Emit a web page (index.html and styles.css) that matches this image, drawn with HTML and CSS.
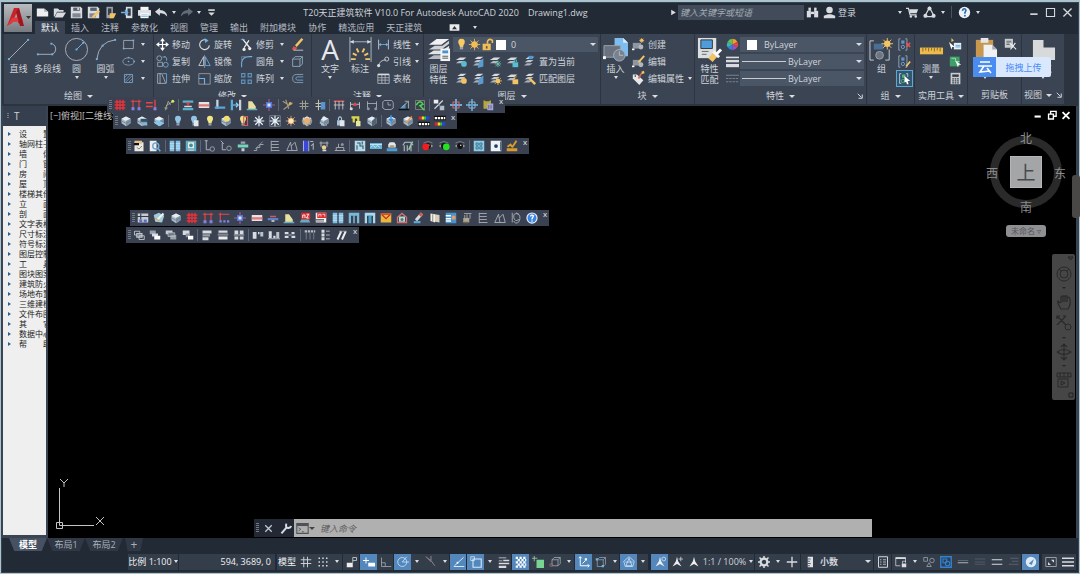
FILE: index.html
```html
<!DOCTYPE html>
<html lang="zh-CN">
<head>
<meta charset="utf-8">
<title>T20天正建筑软件 V10.0</title>
<link rel="stylesheet" href="styles.css">
</head>
<body>
<div class="app">
  <header class="head">
    <button class="logo" data-icon="logo" aria-label="应用程序菜单"></button>
    <div class="head-main">
      <div class="titlebar">
        <div class="qat">
          <button data-icon="new"></button><button data-icon="open"></button><button data-icon="save"></button><button data-icon="saveas"></button><button data-icon="mobopen"></button><button data-icon="mobsave"></button><button data-icon="print"></button><button data-icon="undo"></button><button class="drop" aria-label="放弃列表"></button><button data-icon="redo"></button><button class="drop" aria-label="重做列表"></button><button data-icon="more"></button>
        </div>
        <div class="title"><span>T20天正建筑软件 V10.0 For Autodesk AutoCAD 2020</span><span>Drawing1.dwg</span></div>
        <div class="search"><span data-icon="right"></span><input type="text" placeholder="键入关键字或短语" aria-label="搜索"></div>
        <div class="account">
          <button data-icon="binoc"></button><button class="login"><span data-icon="user"></span>登录</button>
          <button class="drop push" aria-label="登录菜单"></button><button data-icon="cart"></button><button data-icon="share"></button><button class="drop" aria-label="共享菜单"></button><i class="vbar"></i><button data-icon="help"></button><button class="drop" aria-label="帮助菜单"></button>
        </div>
        <div class="winctl"><button data-icon="min"></button><button data-icon="max"></button><button data-icon="close"></button></div>
      </div>
      <nav class="tabs">
        <button class="on">默认</button><button>插入</button><button>注释</button><button>参数化</button><button>视图</button><button>管理</button><button>输出</button><button>附加模块</button><button>协作</button><button>精选应用</button><button>天正建筑</button>
        <button class="tabmin" data-icon="tabmin"></button><button class="drop" aria-label="选项卡菜单"></button>
      </nav>
    </div>
  </header>

  <div class="ribbon">
    <section class="panel p-draw">
      <div class="body">
        <button class="big"><span data-icon="line"></span>直线</button>
        <button class="big"><span data-icon="pline"></span>多段线</button>
        <button class="big"><span data-icon="circle"></span>圆<i class="dn"></i></button>
        <button class="big"><span data-icon="arc"></span>圆弧<i class="dn"></i></button>
        <div class="col">
          <button class="sm"><span data-icon="rect"></span><i class="dn"></i></button>
          <button class="sm"><span data-icon="ellipse"></span><i class="dn"></i></button>
          <button class="sm"><span data-icon="hatch"></span><i class="dn"></i></button>
        </div>
      </div>
      <h2>绘图<i class="dn"></i></h2>
    </section>
    <section class="panel p-modify">
      <div class="body wide">
        <div class="col">
          <button class="sm"><span data-icon="move"></span>移动</button>
          <button class="sm"><span data-icon="copy"></span>复制</button>
          <button class="sm"><span data-icon="stretch"></span>拉伸</button>
        </div>
        <div class="col">
          <button class="sm"><span data-icon="rotate"></span>旋转</button>
          <button class="sm"><span data-icon="mirror"></span>镜像</button>
          <button class="sm"><span data-icon="scale"></span>缩放</button>
        </div>
        <div class="col">
          <button class="sm"><span data-icon="trim"></span>修剪<i class="dn"></i></button>
          <button class="sm"><span data-icon="fillet"></span>圆角<i class="dn"></i></button>
          <button class="sm"><span data-icon="array"></span>阵列<i class="dn"></i></button>
        </div>
        <div class="col">
          <button class="sm" data-icon="erase"></button><button class="sm" data-icon="explode"></button><button class="sm" data-icon="offset"></button>
        </div>
      </div>
      <h2>修改<i class="dn"></i></h2>
    </section>
    <section class="panel p-annot">
      <div class="body">
        <button class="big"><span class="letter">A</span>文字<i class="dn"></i></button>
        <button class="big"><span data-icon="dim"></span>标注</button>
        <div class="col">
          <button class="sm"><span data-icon="linear"></span>线性<i class="dn"></i></button>
          <button class="sm"><span data-icon="leader"></span>引线<i class="dn"></i></button>
          <button class="sm"><span data-icon="table"></span>表格</button>
        </div>
      </div>
      <h2>注释<i class="dn"></i></h2>
    </section>
    <section class="panel p-layer">
      <div class="body">
        <button class="big"><span data-icon="layers"></span>图层<br>特性</button>
        <div class="col grow">
          <div class="field"><span data-icon="bulb"></span><span data-icon="sun"></span><span data-icon="unlock"></span><i class="swatch"></i><select aria-label="图层"><option>0</option></select></div>
          <div class="iconrow"><button data-icon="lyoff"></button><button data-icon="lyiso"></button><button data-icon="lyfrz"></button><button data-icon="lylock"></button><button class="sm"><span data-icon="lycur"></span>置为当前</button></div>
          <div class="iconrow"><button data-icon="lyon"></button><button data-icon="lyiso"></button><button data-icon="lythaw"></button><button data-icon="lyunlock"></button><button class="sm"><span data-icon="lymatch"></span>匹配图层</button></div>
        </div>
      </div>
      <h2>图层<i class="dn"></i></h2>
    </section>
    <section class="panel p-block">
      <div class="body">
        <button class="big"><span data-icon="insert"></span>插入<i class="dn"></i></button>
        <div class="col">
          <button class="sm"><span data-icon="bcreate"></span>创建</button>
          <button class="sm"><span data-icon="bedit"></span>编辑</button>
          <button class="sm"><span data-icon="battr"></span>编辑属性<i class="dn"></i></button>
        </div>
      </div>
      <h2>块<i class="dn"></i></h2>
    </section>
    <section class="panel p-props">
      <div class="body">
        <button class="big"><span data-icon="match"></span>特性<br>匹配</button>
        <div class="col grow">
          <div class="proprow"><button data-icon="wheel"></button><div class="field"><i class="swatch in"></i><select aria-label="对象颜色"><option>ByLayer</option></select></div></div>
          <div class="proprow"><button data-icon="lweight"></button><div class="field"><i class="rule"></i><select aria-label="线宽"><option>ByLayer</option></select></div></div>
          <div class="proprow"><button data-icon="ltype"></button><div class="field"><i class="rule"></i><select aria-label="线型"><option>ByLayer</option></select></div></div>
        </div>
      </div>
      <h2>特性<i class="dn"></i><span class="launch" data-icon="launch"></span></h2>
    </section>
    <section class="panel p-group">
      <div class="body">
        <button class="big"><span data-icon="group"></span>组</button>
        <div class="col"><button class="sm" data-icon="ungroup"></button><button class="sm" data-icon="gedit"></button><button class="sm sel" data-icon="gsel"></button></div>
      </div>
      <h2>组<i class="dn"></i></h2>
    </section>
    <section class="panel p-util">
      <div class="body">
        <button class="big"><span data-icon="measure"></span>测量<i class="dn"></i></button>
        <div class="col"><button class="sm" data-icon="qsel"></button><button class="sm" data-icon="selall"></button><button class="sm" data-icon="calc"></button></div>
      </div>
      <h2>实用工具<i class="dn"></i></h2>
    </section>
    <section class="panel p-clip">
      <div class="body">
        <button class="big"><span data-icon="paste"></span>粘贴<i class="dn"></i></button>
        <div class="col"><button class="sm" data-icon="cut"></button></div>
      </div>
      <h2>剪贴板</h2>
    </section>
    <section class="panel p-view">
      <div class="body center"><button class="big"><span data-icon="base"></span>基点<i class="dn"></i></button></div>
      <h2>视图<i class="dn"></i><span data-icon="launch"></span></h2>
    </section>
    <button class="upload"><span data-icon="cloud"></span><b>拖拽上传</b></button>
  </div>

  <main class="work">
    <aside class="palette">
      <div class="pal-head"><i class="grip"></i>T</div>
      <ul>
        <li>设　　置</li><li>轴网柱子</li><li>墙　　体</li><li>门　　窗</li><li>房　　间</li><li>屋　　顶</li><li>楼梯其他</li><li>立　　面</li><li>剖　　面</li><li>文字表格</li><li>尺寸标注</li><li>符号标注</li><li>图层控制</li><li>工　　具</li><li>图块图案</li><li>建筑防火</li><li>场地布置</li><li>三维建模</li><li>文件布图</li><li>其　　它</li><li>数据中心</li><li>帮　　助</li>
      </ul>
    </aside>
    <div class="canvas">
      <div class="viewlabel">[−]俯视][二维线框]</div>
      <div class="docctl"><button data-icon="dmin"></button><button data-icon="drest"></button><button data-icon="dclose"></button></div>

      <div class="toolbar tb1" data-tools="axisgrid axiscol axisdim axiswand | wallred wallpink corner doorin slab column | penpair hash hashblue | dimtab dimred dimgray clock angle check | nodes planred planblue bag"></div>
      <div class="toolbar tb2" data-tools="cube cubehalf cubeopen | bulbblue bulbdoc bulbyel bulbcube bulbred snow snowbox sunny suncube lockcube lockdoc keyyel cubeedge | cubedown cubepen rainbow rainlow"></div>
      <div class="toolbar tb3" data-tools="folder mag | panes paneside | leg leg2 greenbar steps ladder slope doorblue doorlamp bench | window wave awning house | eyered eyegreen eye | fourpane dotbox crane"></div>
      <div class="toolbar tb4" data-tools="settings edit3d cube axisgrid axiscol axisdots column wallpink walllow slab areared tablered panes portal gate mail stamp pencil book tablist handpen ladder slope spiral info"></div>
      <div class="toolbar tb5" data-tools="copy1 copy2 copy3 copy4 | alignl alignc alignd | tiles1 tiles2 tiles3 | pins pinlist slashes"></div>

      <div class="cube">
        <div class="ring"></div><button class="top">上</button>
        <span class="n">北</span><span class="s">南</span><span class="w">西</span><span class="e">东</span>
        <button class="wcs">未命名 ▿</button>
      </div>
      <div class="navbar"><span data-icon="navtop"></span><button data-icon="wheelnav"></button><i class="dn"></i><button data-icon="hand"></button><button data-icon="zoomx"></button><i class="dn"></i><button data-icon="orbit"></button><i class="dn"></i><button data-icon="motion"></button><span data-icon="navend"></span></div>
      <div class="edge"></div>
      <div class="ucs" data-icon="ucs"></div>
      <div class="cmd"><i class="grip"></i><button data-icon="x"></button><button data-icon="wrench"></button><div class="cmdbox"><span data-icon="prompt"></span><i class="dn"></i><input type="text" placeholder="键入命令" aria-label="命令行"></div></div>
    </div>
  </main>

  <nav class="layouts"><button class="on">模型</button><button>布局1</button><button>布局2</button><button class="add">+</button></nav>

  <footer class="status">
    <button class="scale">比例 1:100<i class="dn"></i></button>
    <div class="coords">594, 3689, 0</div>
    <button class="model">模型</button>
    <button data-icon="sgrid"></button><button data-icon="sdots"></button><button class="drop" aria-label="捕捉菜单"></button><i class="sep"></i>
    <button data-icon="infer"></button><button class="act" data-icon="dyn"></button><button data-icon="ortho"></button><button class="act" data-icon="polar"></button><button class="drop" aria-label="极轴菜单"></button>
    <button data-icon="iso"></button><button class="drop" aria-label="等轴测菜单"></button><button class="act" data-icon="otrack"></button><button class="act" data-icon="osnap"></button><button class="drop" aria-label="对象捕捉菜单"></button>
    <button data-icon="slw"></button><button class="act" data-icon="transp"></button><button data-icon="cycle"></button><button data-icon="snap3d"></button><button class="drop" aria-label="三维捕捉菜单"></button><i class="sep"></i>
    <button class="act" data-icon="ducs"></button><button data-icon="filter"></button><button class="drop" aria-label="过滤菜单"></button><button class="act" data-icon="gizmo"></button><button class="drop" aria-label="小控件菜单"></button><i class="sep wide-sep"></i>
    <button class="act" data-icon="annvis"></button><button data-icon="annauto"></button><button data-icon="ann"></button><button class="ratio">1:1 / 100%<i class="dn"></i></button><i class="sep"></i>
    <button data-icon="gear"></button><button class="drop" aria-label="工作空间菜单"></button><button data-icon="plus"></button><i class="sep"></i>
    <div class="units"><span data-icon="ruler"></span><div class="field"><select aria-label="单位"><option>小数</option></select></div></div><i class="sep"></i>
    <button data-icon="qprop"></button><i class="sep"></i><button data-icon="lockui"></button><button class="drop" aria-label="锁定菜单"></button>
    <button data-icon="isolate"></button><button data-icon="hwacc"></button><button data-icon="dash1"></button><button data-icon="dash2"></button><button data-icon="dash3"></button><button data-icon="dash4"></button><button class="act" data-icon="perf"></button><i class="sep wide-sep"></i><button data-icon="full"></button><button data-icon="menu"></button>
  </footer>
</div>
<script src="icons.js"></script>
</body>
</html>
```

FILE: styles.css
```css
* { box-sizing: border-box; }
html, body { height: 100%; margin: 0; }
body {
  background: #a9c3cf;
  padding: 2px 1px 1px 1px;
  overflow: hidden;
  font: 9px/11px "Open Sans", "Noto Sans CJK SC", sans-serif;
  color: #cfd4da;
}
button, input, select {
  font: inherit; color: inherit; background: none; border: 0; padding: 0; margin: 0;
}
button { display: flex; align-items: center; justify-content: center; white-space: nowrap; }
[data-icon] { display: inline-flex; align-items: center; justify-content: center; flex: none; }
svg { display: block; width: 13px; height: 13px; overflow: visible; }
.dn, .drop::before, .field::after {
  content: ""; display: block; width: 0; height: 0; flex: none;
  border: 3px solid transparent; border-top-color: #d9dde2; border-bottom: 0;
}
.big .dn, .sm .dn, .drop::before { border-width: 2px; border-top-width: 3px; border-bottom: 0; }
.grip { width: 3px; height: 10px; background: repeating-linear-gradient(#707987 0 1px, transparent 1px 2px); flex: none; }

.app { height: 100%; display: flex; flex-direction: column; background: #222a35; border: 1px solid #39434f; }

/* header */
.head { display: flex; height: 31px; flex: none; }
.logo { width: 28px; height: 28px; margin: 1px 0 0 2px; background: linear-gradient(#b9bcbf, #777b80); }
.logo svg { width: 28px; height: 28px; }
.head-main { flex: 1; display: flex; flex-direction: column; min-width: 0; }
.titlebar { display: flex; align-items: center; height: 19px; }
.qat { display: flex; padding-left: 2px; }
.qat [data-icon] { width: 17px; }
.qat .drop { width: 8px; }
.title { flex: 1; display: flex; justify-content: center; gap: 9px; white-space: nowrap; }
.search { display: flex; align-items: center; gap: 2px; }
.search span, .search svg { width: 5px; }
.search input { width: 126px; height: 15px; background: #414b5a; font-style: italic; padding: 0 2px; outline: 0; }
.search input::placeholder { color: #a4abb5; }
.account { display: flex; width: 178px; align-items: center; }
.account [data-icon] { width: 17px; }
.account .drop { width: 9px; }
.account .push { margin-left: auto; }
.vbar { width: 1px; height: 12px; margin: 0 4px; background: #4b535f; }
.winctl { display: flex; padding: 0 2px 0 43px; }
.winctl button { width: 17px; }
.tabs { display: flex; flex: 1; align-items: stretch; padding-left: 3px; }
.tabs button { padding: 0 6px; color: #b4bac3; }
.tabs .on { background: #3b4453; color: #f0f2f4; }
.tabs .tabmin { margin-left: 14px; }

/* ribbon */
.ribbon { position: relative; display: flex; height: 72px; flex: none; background: #2c3440; padding: 0 14px 2px 2px; gap: 1px; }
.panel { background: #3b4453; display: flex; flex-direction: column; padding-top: 2px; min-width: 0; }
.p-draw { flex: 149 1 0; }
.p-modify { flex: 157 1 0; }
.p-annot { flex: 111 1 0; }
.p-layer { flex: 176 1 0; }
.p-block { flex: 93 1 0; }
.p-props { flex: 171 1 0; }
.p-group { flex: 47 1 0; }
.p-util { flex: 52 1 0; }
.p-clip { flex: 53 1 0; }
.p-view { flex: 42 1 0; }
.body { display: flex; height: 52px; }
.body.wide { gap: 6px; }
.body.center { justify-content: center; }
.panel h2 { position: relative; display: flex; align-items: center; justify-content: center; gap: 5px; margin: 0; font: inherit; line-height: 18px; white-space: nowrap; }
.panel h2 svg { width: 6px; height: 6px; }
.launch { position: absolute; right: 3px; }
.p-util h2, .p-view h2 { gap: 4px; }
.big { width: 29px; flex: none; flex-direction: column; justify-content: flex-start; line-height: 11px; }
.big span { height: 27px; }
.big svg { width: 25px; height: 25px; }
.big .dn { margin-top: 2px; }
.letter { font: 28px/27px "Open Sans", sans-serif; color: #e6e8eb; }
.p-annot .big { width: 30px; }
.p-annot .big:first-child { margin-left: 3px; }
.col { display: flex; flex-direction: column; }
.grow { flex: 1; min-width: 0; }
.sm { height: 17px; justify-content: flex-start; gap: 2px; }
.sm > span { width: 16px; }
.sm .dn { margin-left: 4px; }
.p-draw .sm .dn { margin-left: 3px; }
.p-annot .sm .dn, .p-block .sm .dn { margin-left: 2px; }
.wide .col:last-child { margin-left: 1px; }
.wide .col:last-child .sm { width: 16px; }
.field { flex: 1; display: flex; align-items: center; height: 15px; margin: 1px 2px 1px 0; background: #4a5566; padding-right: 2px; min-width: 0; }
.field select { flex: 1; min-width: 0; appearance: none; outline: 0; }
.field [data-icon] { width: 13px; }
.p-layer .field { padding-left: 2px; flex: none; }
.swatch { width: 10px; height: 10px; background: #fff; margin: 0 5px 0 2px; flex: none; }
.swatch.in { margin: 0 7px; }
.rule { width: 44px; height: 1px; background: #c8ccd2; margin: 0 2px; flex: none; }
.iconrow { display: flex; height: 17px; }
.iconrow > [data-icon] { width: 17px; }
.proprow { display: flex; height: 17px; }
.proprow > [data-icon] { width: 16px; }
.p-group .sm, .p-util .sm, .p-clip .sm { width: 17px; justify-content: center; }
.p-util .big { width: 32px; }
.p-clip .big { width: 34px; }
.sel { background: #31566f; outline: 1px solid #5ea7d8; outline-offset: -1px; }
.upload { position: absolute; right: 27px; top: 23px; width: 78px; height: 20px; background: #d9e8fd; border-radius: 2px; color: #4a8cf5; justify-content: flex-start; }
.upload [data-icon] { width: 23px; height: 20px; background: #4a8cf0; border-radius: 2px 0 0 2px; }
.upload svg { width: 16px; height: 16px; }
.upload b { flex: 1; font-weight: 400; text-align: center; }

/* work area */
.work { flex: 1; display: flex; min-height: 0; background: #3b4453; padding-right: 2px; }
.palette { width: 43px; margin: 0 2px 3px 1px; flex: none; display: flex; flex-direction: column; overflow: hidden; background: #efefef; color: #222; }
.pal-head { display: flex; align-items: center; gap: 5px; height: 20px; padding-left: 4px; background: #363f4d; color: #cfd4da; font-size: 10px; flex: none; }
.pal-head .grip { height: 6px; width: 2px; }
.palette ul { list-style: none; margin: 0; padding: 3px 0; font: 8px/10px "Noto Sans CJK SC", sans-serif; }
.palette li { display: flex; align-items: center; gap: 8px; padding-left: 5px; height: 10px; white-space: nowrap; }
.palette li::before { content: ""; border: 2px solid transparent; border-left: 3px solid #2a5f94; border-right: 0; }
.canvas { position: relative; flex: 1; background: #000; min-width: 0; }
.viewlabel { padding: 4px 2px; color: #c4c4c4; white-space: nowrap; }
.docctl { position: absolute; top: 4px; right: 3px; display: flex; }
.docctl svg { width: 14px; height: 11px; }

.toolbar { position: absolute; z-index: 2; display: flex; align-items: center; height: 16px; padding: 0 9px 0 2px; background: #3a4252; }
.toolbar button { flex: 1 1 0; min-width: 0; }
.toolbar svg { width: 12px; height: 12px; }
.toolbar .sep { width: 1px; height: 12px; margin: 0 1px; background: #5c6573; }
.toolbar .shut { position: absolute; right: 0; top: 0; font: 8px/8px "Open Sans", sans-serif; color: #e8e8e8; width: 6px; }
.tb1 { left: 59px; top: -9px; width: 398px; }
.tb2 { left: 65px; top: 7px; width: 344px; }
.tb3 { left: 78px; top: 32px; width: 403px; }
.tb4 { left: 82px; top: 104px; width: 419px; }
.tb5 { left: 78px; top: 121px; width: 233px; }

.cube { position: absolute; right: 8px; top: 24px; width: 84px; height: 110px; font: 12px/14px "Noto Sans CJK SC", sans-serif; color: #8c8c8c; }
.cube > * { position: absolute; }
.ring { left: 6px; top: 6px; width: 72px; height: 72px; border: 8px solid #2a2a2a; border-radius: 50%; }
.top { left: 26px; top: 26px; width: 32px; height: 32px; background: #a3a5a6; border: 1px solid #b4b6b7; color: #484b4e; font-size: 19px; }
.n { left: 36px; top: 1px; }
.s { left: 36px; top: 70px; }
.w { left: 2px; top: 36px; }
.e { right: 2px; top: 36px; }
.wcs { left: 22px; top: 95px; width: 40px; height: 12px; background: #8f9092; border-radius: 3px; color: #55575a; font-size: 8px; }
.navbar { position: absolute; right: 1px; top: 148px; width: 23px; height: 146px; padding: 2px 0; background: #464646; border-radius: 2px; display: flex; flex-direction: column; align-items: center; justify-content: space-between; }
.navbar .dn { border-width: 2px; border-top-color: #242424; border-bottom: 0; }
.navbar svg { width: 16px; height: 16px; }
.navbar > span { align-self: flex-end; }
.navbar > span svg { width: 8px; height: 5px; }
.edge { position: absolute; right: -4px; top: 69px; width: 8px; height: 43px; background: #4a4747; border-radius: 3px; }
.ucs { position: absolute; left: 6px; bottom: 5px; }
.ucs svg { width: 52px; height: 54px; }
.cmd { position: absolute; left: 206px; right: 204px; bottom: 1px; height: 18px; display: flex; align-items: center; background: #222934; padding-left: 2px; gap: 1px; }
.cmd > button { width: 16px; }
.cmdbox { flex: 1; display: flex; align-items: center; align-self: stretch; background: #b0b0b0; padding-left: 2px; color: #555; }
.cmdbox .dn { border-top-color: #444; margin-right: 5px; }
.cmdbox input { flex: 1; font-style: italic; outline: 0; }
.cmdbox input::placeholder { color: #5c5c5c; }

/* layout tabs and status bar */
.layouts { display: flex; height: 14px; flex: none; padding-left: 7px; }
.layouts button { width: 38px; height: 13px; background: #2f3844; color: #a9b0ba; clip-path: polygon(0 0, 100% 0, 86% 100%, 14% 100%); }
.layouts .on { background: #465162; color: #fff; font-weight: 700; }
.layouts .add { width: 18px; font-size: 12px; margin-left: 2px; }
.status { display: flex; align-items: center; height: 20px; flex: none; padding: 1px 2px 2px 126px; white-space: nowrap; }
.status > * { height: 16px; background: #343d4a; display: flex; align-items: center; flex: none; }
.status > [data-icon] { width: 17px; }
.status .drop { width: 11px; }
.status .sep { width: 1px; background: #222a35; }
.status .wide-sep { width: 3px; }
.status .act { background: #5488bd; outline: 1px solid #222a35; }
.scale { width: 50px; gap: 2px; color: #f0f2f4; }
.coords { width: 96px; justify-content: flex-end; padding-right: 4px; margin: 0 2px 0 1px; color: #f0f2f4; }
.model { width: 20px; color: #f0f2f4; }
.ratio { width: 52px; gap: 3px; }
.scale .dn, .ratio .dn { border-width: 2px; border-top-width: 3px; border-bottom: 0; }
.status .units { flex: 1; min-width: 0; }
.units .field { background: none; margin: 0; }
.units > [data-icon] { width: 17px; }
.units select { padding-left: 2px; font-weight: 700; }
.status svg { width: 12px; height: 12px; }
```

FILE: icons.js
```javascript
const L = '#d8dbdf', B = '#6fb2e6', Y = '#f2c464', G = '#8d949e';
const s = (d, c = L, w = 1) => `<path d="${d}" fill="none" stroke="${c}" stroke-width="${w}"/>`;
const f = (d, c = L) => `<path d="${d}" fill="${c}"/>`;
const r = (x, y, w, h, c = L) => `<rect x="${x}" y="${y}" width="${w}" height="${h}" fill="${c}"/>`;
const c = (x, y, q, col = L) => `<circle cx="${x}" cy="${y}" r="${q}" fill="${col}"/>`;
const o = (x, y, q, col = L, w = 1) => `<circle cx="${x}" cy="${y}" r="${q}" fill="none" stroke="${col}" stroke-width="${w}"/>`;

const cube = f('M2 5 8 2 14 5V11L8 15 2 11Z', '#a9bac8') + f('M2 5 8 2 14 5 8 8Z', '#e6edf2') + f('M8 8 14 5V11L8 15Z', '#7f93a5') + s('M2 8 8 11 14 8', '#6b7f90');
const bulb = k => f('M4 5A4 4 0 0 1 12 5C12 8 10 8 10 11H6C6 8 4 8 4 5Z', k) + r(6, 11, 4, 3, '#9aa3ad');
const snow = s('M8 1V15M1 8H15M3 3 13 13M13 3 3 13', '#e8f4fa', 1.6);
const sun = k => s('M8 1V15M1 8H15M3 3 13 13M13 3 3 13', k) + c(8, 8, 4, k);
const lock = f('M4 7H12V14H4Z', '#a9c4d6') + s('M6 7V4Q8 1 10 4V7', '#a9c4d6', 1.5);
const lay = f('M1 6 6 3H14L10 6Z') + f('M1 10 5 7.500H12L9 10Z', '#b4bac2');
const lay3 = f('M3 5 7 2H14L10 5Z') + f('M2 9 6 6H13L9 9Z', '#c3c8ce') + f('M1 13 5 10H12L8 13Z', '#a9b0b8');
const doc = r(8, 7, 6, 8, '#e5e8ea');
const eye = f('M1 8Q8 1 15 8 8 14 1 8Z', '#999') + c(8, 8, 4, '#111') + s('M2 4Q8 0 14 4', '#888') + c(9, 7, 1, '#eee');
const star = (x, y, q) => `<g transform="translate(${x} ${y})">` + s(`M0-${q}V${q}M-${q} 0H${q}M-${q * .7}-${q * .7} ${q * .7} ${q * .7}M${q * .7}-${q * .7}-${q * .7} ${q * .7}`, Y) + c(0, 0, q * .55, Y) + '</g>';
const ann = f('M8 1 9.500 7 14 14 8 10.500 2 14 6.500 7Z', '#eceef0');

const ICONS = {
  logo: ['0 0 28 28', f('M3 22 10 4H15L18 20 14 19 12.500 9 8 19Z', '#c8232b') + f('M3 22 8 14 17 13 19 17 9 18Z', '#e03a3e') + f('M15 4 20 22H16L12 8Z', '#a3151d') + f('M22 12H27L24.500 15Z', '#333')],
  new: f('M1 3H10L15 7V13H1Z', '#eceef0') + f('M10 3V7H15Z', '#aab0b8'),
  open: f('M1 3H6L8 5H13V7H5L2 13H1Z') + f('M5 8H16L12 14H2Z'),
  save: f('M1 1H13L15 3V15H1Z') + r(4, 2, 8, 4, '#59626f') + r(3, 9, 10, 5, '#808893') + r(9, 2, 2, 3),
  saveas: f('M1 1H13L15 3V15H1Z') + r(4, 2, 8, 4, '#59626f') + r(3, 9, 8, 5, '#808893') + s('M7 14 15 6', Y, 3),
  mobopen: r(3, 1, 8, 14, '#9aa1aa') + r(5, 3, 4, 8, '#333c48') + f('M7 9H15L12 15H7Z', Y),
  mobsave: r(6, 1, 8, 14) + r(8, 3, 4, 9, '#333c48') + s('M0 8H8M5 5 8 8 5 11', B, 2),
  print: r(3, 1, 10, 5, '#f4f5f6') + f('M0 5H16V12H0Z', '#dfe2e5') + r(3, 9, 10, 6, '#fff') + s('M4 11H12M4 13H12', B),
  undo: f('M0 7 6 2V5Q14 5 15 13 11 8 6 9V12Z'),
  redo: f('M16 7 10 2V5Q2 5 1 13 5 8 10 9V12Z', '#626b78'),
  more: r(4, 4, 8, 2) + f('M4 8H12L8 12Z'),
  right: ['0 0 5 14', f('M0 4 5 7 0 10Z')],
  binoc: r(1, 6, 5, 8) + r(10, 6, 5, 8) + r(3, 2, 3, 4) + r(10, 2, 3, 4) + r(6, 7, 4, 3),
  user: c(8, 5, 4) + f('M1 15V12L6 10H10L15 12V15Z'),
  cart: s('M0 3H3L5 11H13', L, 1.5) + f('M4 4H15L13 9H5Z') + c(6, 13, 1.5) + c(12, 13, 1.5),
  share: s('M8 2 14 13H2Z', L, 1.5) + c(8, 3, 2.5) + c(3, 12, 2.5) + c(13, 12, 2.5),
  help: c(8, 8, 7, '#eef1f4') + s('M5.500 6Q6 3 8.500 3.500 11 5 8.500 8V9.500', '#2e69ad', 2) + c(8.5, 12, 1.2, '#2e69ad'),
  min: r(4, 9, 9, 2), max: s('M3 3H13V13H3Z', L, 1.3), close: s('M3 3 13 13M13 3 3 13', L, 1.6),
  tabmin: r(2, 4, 12, 8, '#e8eaec') + f('M5 10 8 6 11 10Z', '#333'),
  line: ['0 0 26 26', s('M3 23 23 3', '#a9b0b9') + r(2, 22, 2, 2, B) + r(22, 2, 2, 2, B)],
  pline: ['0 0 26 26', s('M3 18H18A6 6 0 0 0 18 7', '#a9b0b9') + r(2, 17, 2, 2, B) + r(17, 17, 2, 2, B) + r(16, 6, 2, 2, B)],
  circle: ['0 0 26 26', o(13, 13, 11.5, '#a9b0b9') + s('M13 13 20 6', B) + r(12, 12, 2, 2, B) + r(19, 5, 2, 2, B)],
  arc: ['0 0 26 26', s('M4 23Q6 5 23 3', '#a9b0b9') + r(3, 22, 2, 2, B) + r(22, 2, 2, 2, B) + r(9, 8, 2, 2, B)],
  rect: s('M2 3H14V13H2Z', '#aab1ba') + r(1, 12, 2, 2, B) + r(13, 2, 2, 2, B),
  ellipse: '<ellipse cx="8" cy="8" rx="7" ry="4.500" fill="none" stroke="#8fa6bb"/>' + c(8, 8, 1, B) + c(8, 3, 1, B) + c(15, 8, 1, B),
  hatch: s('M3 3H13V13H3Z', B) + s('M3 7 7 3M3 11 11 3M4 13 13 4M8 13 13 8', '#8995a3'),
  move: s('M8 2V14M2 8H14', '#fff', 1.5) + f('M8 0 11 4H5ZM8 16 11 12H5ZM0 8 4 5V11ZM16 8 12 5V11Z', '#fff'),
  copy: o(4, 4, 3, '#9dadbc') + r(8, 2, 4, 1, B) + o(12, 12, 3, B) + s('M2 9H8V14H2ZM10 2Q14 2 13 7', '#9dadbc'),
  stretch: s('M2 2H7L12 14H2ZM5 2V14', '#aeb6bf') + s('M8 2H13V14', B),
  rotate: s('M11 3A6 6 0 1 0 14 9', L, 1.4) + f('M8 0 13 3 9 6Z', B),
  mirror: s('M7 2V13H1Z', L) + s('M9 2V13H15Z', B) + s('M8 0V16', '#8d949e'),
  scale: s('M1 2H15V15H1Z', '#9aa3ad') + s('M1 8H8V15', B, 1.4),
  trim: s('M3 1 12 12M11 3 5 12', '#eee', 1.6) + c(12, 13, 2, '#eee') + c(5, 14, 2, '#eee') + s('M1 2H6', B),
  fillet: s('M2 15V9Q3 2 12 2H15', B, 1.3) + s('M2 7V2H8', '#7a838f'),
  array: s('M2 2H6V6H2ZM10 2H14V6H10ZM2 10H6V14H2ZM10 10H14V14H10Z', '#5f92bd', 1.4),
  erase: s('M6 10 14 1', Y, 3) + f('M3 10 8 12 5 15 1 14Z', '#e0524a') + s('M3 15H15'),
  explode: s('M2 5H11V14H2ZM2 5 5 2H14L11 5M14 2V11L11 14', '#9ab4c8'),
  offset: s('M15 3H7A5 5 0 0 0 7 13H15', '#9aa6b2') + s('M15 6H8A2 2 0 0 0 8 10H15', B),
  dim: ['0 0 26 26', s('M2 0V26M24 0V26M2 5H24', '#a9b8c5') + f('M2 5 6 3V7ZM24 5 20 3V7Z') + s('M9 12 11 16M17 12 15 16M5 17 9 19M21 17 17 19M3 23H8M23 23H18', Y, 2)],
  linear: s('M2 2V14M14 2V14', L) + s('M3 8H13', B) + f('M2 8 5 6V10ZM14 8 11 6V10Z', B),
  leader: s('M2 14Q3 6 11 6', L) + o(12, 5, 2.5) + c(2, 13, 2),
  table: s('M1 3H15V14H1ZM1 7H15M1 10H15M6 3V14M10 3V14', '#b5bbc3') + r(1, 2, 14, 2),
  layers: ['0 0 26 26', f('M3 8 11 2H24L16 8Z', '#f0f1f2') + f('M3 13 9 9H17L24 4V7L16 13Z', '#cfd2d6') + f('M2 18 8 14H17L24 9V12L15 18Z', '#e3e5e7') + f('M2 23 8 19H16V23Z', '#b8bcc2') + r(15, 12, 10, 13, '#f2f4f5') + r(17, 14, 6, 3, '#4b93cf') + s('M17 20H23M17 22H23', '#555')],
  bulb: bulb('#f7cc63'), sun: sun('#f3bd55'),
  unlock: r(2, 7, 10, 8, '#f3bd55') + s('M8 7V4Q10 0 14 3V6', '#f3bd55', 2) + r(6, 10, 2, 3, '#555'),
  lyoff: lay + c(11, 11, 3.5, '#58bdd0'), lyiso: lay3 + f('M9 8 14 4V14L7 16Z', '#5b9bd0'),
  lyfrz: lay + s('M11 7V15M7 11H15M8 8 14 14M14 8 8 14', '#67c9b0'), lylock: lay + r(8, 9, 7, 6, '#55c0d4') + s('M10 9V6H13V9', '#55c0d4'),
  lycur: lay3 + f('M7 1H12V5H7Z', '#4a9ae0'), lyon: lay3 + c(11, 11, 3.5, Y), lythaw: lay3 + star(11, 11, 5),
  lyunlock: lay + r(8, 9, 7, 6, Y) + s('M10 9V6H13', Y), lymatch: lay3 + s('M8 8 15 15', Y, 3),
  insert: ['0 0 26 26', f('M12 1H21L26 6V20H12Z', '#7dbdf0') + f('M21 1V6H26Z', '#d6ebfb') + r(1, 9, 17, 12, '#69727e') + s('M1 9H18V21H1Z', '#9aa3ad') + c(17, 19, 6, '#78828e') + o(17, 19, 6, '#a9b1ba') + s('M17 15V19H21', '#b5bcc4') + r(0, 20, 3, 3, '#fff')],
  bcreate: r(1, 6, 10, 7, '#8f97a2') + c(11, 11, 3, '#b1b7bf') + star(12, 3, 3) + r(0, 13, 3, 2, '#fff'),
  bedit: r(1, 6, 10, 7, '#8f97a2') + c(11, 12, 3, '#b1b7bf') + s('M8 9 15 1', Y, 2.5) + r(0, 13, 3, 2, '#fff'),
  battr: f('M1 3H6L14 10 9 16 1 8Z', '#e6e8ea') + s('M8 8 12 1', '#d76a4c', 2) + s('M12 1 15 0', Y, 3) + c(4, 5, 1, '#333'),
  match: ['0 0 26 26', r(1, 1, 19, 21, '#dcdfe2') + r(4, 3, 12, 9, '#4e9cdb') + s('M4 3H16V12H4Z', '#333') + s('M5 15H12M5 18H10', '#666') + s('M14 24 19 18', Y, 6) + s('M17 15 23 21', '#f6f6f6', 3) + s('M20 18 25 13', '#fff', 3)],
  wheel: f('M8 8V1A7 7 0 0 1 14 4.500Z', '#f0a030') + f('M8 8 14 4.500A7 7 0 0 1 14 11.500Z', '#e04a3a') + f('M8 8 14 11.500A7 7 0 0 1 8 15Z', '#a44ac0') + f('M8 8V15A7 7 0 0 1 2 11.500Z', '#3c7be0') + f('M8 8 2 11.500A7 7 0 0 1 2 4.500Z', '#37b8b0') + f('M8 8 2 4.500A7 7 0 0 1 8 1Z', '#6cc04a'),
  lweight: r(0, 2, 16, 2) + r(0, 6, 16, 3) + r(0, 11, 16, 4),
  ltype: s('M0 4H16', '#888f99') + '<path d="M0 8H16M0 12H16" stroke="#888f99" stroke-dasharray="3 1"/>',
  launch: ['0 0 8 8', s('M1 1 6 6M7 2V7H2', L, 1.3)],
  group: ['0 0 26 26', s('M5 4H1V24H5M17 24H21V13', '#c8cdd3') + r(5, 7, 10, 6, '#4b6f94') + c(11, 19, 4, '#6c7581') + o(11, 19, 4, '#9ba3ad') + star(19, 7, 6)],
  ungroup: s('M3 1H1V15H3M9 15H11V1H9', '#9fb3c5') + r(4, 3, 4, 4, '#5e94c8') + o(6, 11, 2, B) + s('M10 6 15 11M15 6 10 11', '#e2564e', 1.8),
  gedit: s('M3 1H1V15H3M9 15H11V1H9', '#9fb3c5') + r(4, 3, 4, 4, '#5e94c8') + o(6, 11, 2, B) + s('M10 14 15 8', Y, 2),
  gsel: s('M4 2H2V14H4M10 2H12V6') + r(5, 3, 4, 4, '#50b878') + o(6, 11, 2, '#50b878') + f('M8 5 15 11H12L13 15 11 15 10 12 8 13Z', '#fff'),
  measure: ['0 0 26 26', r(1, 11, 24, 7, '#eebb4d') + s('M4 11V15M7 11V14M10 11V15M13 11V14M16 11V15M19 11V14M22 11V15', '#8d6a24')],
  qsel: r(6, 6, 9, 8, '#e7f0f7') + s('M8 9H14M8 11H14', '#4b93cf') + f('M0 5 7 11 4 11 3 14Z', '#fff') + f('M3 0 6 3 3 5Z', Y),
  selall: r(1, 2, 12, 12, '#3f9f67') + s('M3 4H8V8H13', '#a8e0bf') + f('M8 7 15 12 12 12 11 15Z', '#fff'),
  calc: r(2, 1, 12, 14, '#c9cdd2') + r(4, 3, 8, 3, '#333c48') + '<path d="M4 8.500H12M4 11H12M4 13.500H12" stroke="#333c48" stroke-width="1.500" stroke-dasharray="2 1"/>',
  paste: ['0 0 26 26', r(3, 3, 18, 22, '#c9984f') + r(8, 1, 8, 5, '#e4e6e8') + f('M11 8H20L25 13V26H11Z', '#eff1f2') + f('M20 8V13H25Z', '#a4aab2')],
  cut: r(1, 1, 10, 11, '#c9cdd2') + s('M3 4H9M3 6H9M3 8H7', '#555') + s('M7 6 15 14M14 6 8 14', '#eee', 1.3),
  base: ['0 0 26 26', f('M2 3H13V11H25V24H2Z', '#d7d9db')],
  cloud: s('M3 3H13M1 7H15', '#fff', 1.6) + s('M7 7 3 13 13 12M10 9 14 14', '#fff', 1.6),
  dmin: r(3, 8, 9, 3, '#fff'), drest: s('M6 5V2H14V9H11M3 6H10V13H3Z', '#fff', 2), dclose: s('M3 3 13 13M13 3 3 13', '#fff', 2.6),

  axisgrid: s('M4 1V15M8 1V15M12 1V15M1 4H15M1 8H15M1 12H15', '#e8323a', 1.8),
  axiscol: s('M1 3H15M4 1V12M12 1V12', '#e8454a', 1.5) + r(2, 11, 4, 4, '#7d83e8') + r(10, 11, 4, 4, '#7d83e8'),
  axisdim: s('M0 5H9M0 10H9M12 1V15', '#e8454a', 1.8) + r(10, 11, 4, 4, '#7d83e8'),
  axisdots: s('M1 3H15M3 1V12', '#e8454a', 1.5) + r(2, 11, 3, 3, '#7d83e8') + r(7, 11, 3, 3, '#7d83e8') + r(12, 11, 3, 3, '#7d83e8'),
  axiswand: s('M3 15 7 3 10 8M4 9 12 4', '#b9b49a') + c(4, 12, 2, '#8d9486') + c(13, 3, 2, '#dce85a'),
  wallred: r(1, 2, 14, 3, '#55b3c8') + r(1, 12, 14, 3, '#55b3c8') + f('M5 5H11L8 10Z', '#e8323a') + r(3, 9, 10, 2),
  wallpink: r(1, 4, 14, 8, '#e6e3e0') + r(1, 7, 14, 3, '#e0777c'),
  walllow: r(1, 8, 14, 3, '#5b80c8') + r(4, 5, 8, 2, '#d15a60') + r(6, 11, 4, 2),
  corner: r(3, 1, 3, 12, '#c7d6e2') + r(1, 10, 14, 3, '#5aa5d8'),
  doorin: r(1, 1, 3, 14, '#55aede') + r(12, 1, 3, 14, '#c5d0d8') + s('M4 8H11M8 5 11 8 8 11', '#8fd0ff', 1.5),
  slab: f('M3 14V3H8L13 10V14Z', '#e7e0a0') + r(1, 13, 14, 2, '#60b0c0'),
  column: s('M8 0V16M0 8H16', '#a65a8e', 1.5) + r(4, 4, 8, 8, '#5276d8') + r(6, 6, 4, 4, '#d8e2ff'),
  penpair: s('M1 3 9 8M2 14 14 5M5 1 9 13', '#a39a7e', 1.5) + c(11, 6, 2, '#d8b05c'),
  hash: s('M6 2V14M10 2V14M2 6H14M2 10H14', '#9a9f91', 1.4),
  hashblue: s('M6 1V15M2 6H12M2 10H12', '#c7c3af', 1.4) + r(9, 4, 6, 10, '#5b94cc'),
  dimtab: s('M1 3H15', '#e05a5e', 2) + s('M3 3V14M8 3V14M13 3V14M1 8H15'),
  dimred: s('M2 4V13M14 4V13M2 7H14') + f('M5 9 8 4 11 9Z', '#e8454a') + c(3, 13, 2),
  dimgray: s('M2 3V13M14 3V13M2 6H14', '#b8bec5') + c(3, 13, 2, G) + c(13, 13, 2, G),
  clock: s('M3 2H13L15 5V12L12 14H4L1 12V4Z', '#b8bec5') + s('M8 4V8H12', '#b8bec5'),
  angle: f('M2 13 10 6V13Z', '#4d98c4') + s('M5 11 14 3M9 3H14V13', '#b8bec5') + r(1, 13, 14, 2, '#111'),
  check: s('M2 2H14V14H2Z', '#8a8e80') + s('M3 8Q8 0 12 7L8 9 14 15', '#50d850', 2),
  nodes: r(1, 1, 6, 5, '#eee') + r(9, 9, 6, 6, '#b8bec5') + s('M2 13 13 2', L, 1.5) + s('M6 6 11 11', '#58a0e0'),
  planred: s('M8 0V16M0 8H16', '#6aaee0', 2.5) + s('M4 4H12V12H4Z', '#d86a6e', 1.4),
  planblue: s('M8 0V16M0 8H16', '#5b9cc8', 2.5) + s('M4 4H12V12H4Z', '#9ab9ce', 1.2),
  bag: r(2, 2, 10, 11, '#b5aa39') + r(4, 0, 6, 3, '#444') + f('M7 6H15V15H7Z', '#a4a4df') + s('M9 8V13M12 8V13', '#555'),
  cube: cube, cubehalf: cube + r(6, 5, 10, 4, '#315167') + r(8, 10, 7, 4, '#85b8d0'), cubeopen: cube + f('M1 10 7 7 15 11 9 15Z', '#85c8ea'),
  bulbblue: bulb('#91c5e3'), bulbdoc: bulb('#91c5e3') + doc, bulbyel: bulb('#f3e684'), bulbcube: cube + c(9, 5, 4, '#f0df75'), bulbred: bulb('#efe38a') + s('M9 2H14V14H9Z', '#d95a5a', 1.5),
  snow: snow, snowbox: s('M1 1H15V15H1Z', '#8a949e') + snow, sunny: sun('#efb77b') + c(8, 8, 3, '#ffe8c0'), suncube: cube + sun('#e4ad76'),
  lockcube: lock + cube.replace(/M2 5/g, 'M4 6'), lockdoc: lock + doc, keyyel: s('M2 3H11V8M5 3V10', '#dbd845', 3) + r(8, 8, 6, 7, '#e6e8a0'), cubeedge: cube + f('M8 8 14 2V11L8 15Z', '#53606e'),
  cubedown: cube + s('M8 0V8M5 5 8 8 11 5', '#2f8ae0', 2), cubepen: cube + s('M6 10 13 2', '#e99a4c', 2),
  rainbow: r(1, 2, 4, 4, '#e22') + r(5, 2, 3, 4, '#ed2') + r(8, 2, 3, 4, '#2c3') + r(11, 2, 4, 4, '#24e') + r(0, 9, 16, 6, '#111') + '<path d="M1 12H15" stroke="#fff" stroke-width="3" stroke-dasharray="3 1"/>',
  rainlow: r(0, 1, 16, 6, '#111') + '<path d="M1 4H15" stroke="#fff" stroke-width="3" stroke-dasharray="3 1"/>' + r(1, 10, 4, 4, '#e22') + r(5, 10, 3, 4, '#ed2') + r(8, 10, 3, 4, '#2c3') + r(11, 10, 4, 4, '#24e'),
  folder: r(2, 3, 12, 12, '#ebe8e0') + r(2, 1, 10, 4, '#e2c48a') + r(1, 4, 7, 3, '#111') + s('M5 10 8 12 12 8', '#666'),
  mag: r(1, 1, 9, 14, '#eceff1') + o(9, 8, 4, '#6fabd5', 2) + s('M12 11 15 15', '#6fabd5', 2),
  panes: r(1, 1, 6, 14, '#7fc0e4') + r(9, 1, 6, 14, '#7fc0e4') + s('M1 5H7M1 8H7M1 11H7M9 5H15M9 8H15M9 11H15', '#d7eef9'),
  paneside: r(1, 1, 14, 14, '#62abc5') + r(4, 3, 8, 8, '#e5ecd0') + c(8, 7, 2.5, '#3f8ba5') + r(4, 13, 8, 1, '#eee'),
  leg: s('M3 1V13H8M1 1H5', '#aeb4ba', 1.3) + o(11, 12, 3, '#aeb4ba'),
  leg2: s('M3 4V13H8M1 1 5 5', '#aeb4ba', 1.3) + o(12, 11, 3, '#aeb4ba'),
  greenbar: r(1, 6, 14, 4, '#74d6ba') + r(5, 2, 6, 3, '#9aa3ad') + r(6, 11, 4, 4, '#c6ccd2'),
  steps: s('M1 14H5V10H9V6H14', '#9ea4aa', 1.3) + s('M3 12 13 2', '#9ea4aa'),
  ladder: s('M3 1V15M3 2H13M3 6H13M3 10H13M3 14H14', '#a9adb2', 1.2),
  slope: s('M1 14 6 3 8 14M7 8 12 3 15 14M1 14H15', '#a9adb2', 1.2),
  doorblue: r(1, 1, 8, 14, '#3a48d8') + s('M2 1V15M9 1V15', '#c5ccf0') + s('M11 2H15M12 8 15 5V13', '#aeb4ba', 1.4),
  doorlamp: s('M2 4H14M4 2V9M12 2V9', '#a9adb2', 1.5) + c(8, 10, 3, '#e8d38a') + r(6, 13, 5, 2),
  bench: s('M1 14H15M3 10H13M3 10V14M13 10V14M6 5V10', '#a9adb2', 1.2) + c(11, 6, 2, G),
  window: r(1, 1, 14, 14, '#b5dae8') + s('M4 4H8V8H12V12M4 7V13M11 2V6', '#315466', 1.4),
  wave: r(0, 4, 16, 8, '#62b4d8') + s('M0 6H16M1 10 4 7 7 10 10 7 13 10', '#dff3fb'),
  awning: r(1, 11, 14, 4, '#4b9ed5') + f('M3 10V6L5 3H11L13 6V10Z', '#e8e8e3') + r(5, 7, 6, 3, '#aa9985'),
  house: s('M1 7 4 3H11L15 7M3 7V15M7 7V15M12 7V15', '#b8c4c8', 1.4) + s('M9 13 14 2', '#9ccfa8', 2),
  eyered: eye + c(5, 9, 4.5, '#f31c1c'), eyegreen: eye + c(11, 9, 4.5, '#22e222'), eye: eye,
  fourpane: r(1, 1, 14, 14, '#8fcbe4') + s('M4 4H7V7H4ZM9 4H12V7H9ZM4 9H7V12H4ZM9 9H12V12H9Z', '#2a6481'),
  dotbox: r(1, 1, 14, 14, '#f0f3f5') + c(8, 8, 2.5, '#203e66') + s('M14 2V14', '#203e66'),
  crane: r(1, 11, 14, 4, '#d99c2d') + s('M2 9 6 6 8 9M8 10 14 1', '#d99c2d', 2.5),
  settings: r(1, 2, 14, 12, '#c6cbd1') + s('M0 6H16M5 2V10', '#333c48', 1.5) + r(3, 10, 4, 4, '#5f6ec9') + r(9, 10, 4, 4, '#5f6ec9'),
  edit3d: f('M1 4 8 1 15 5 12 14 3 13Z', '#9fcdd9') + s('M5 11 14 2', '#f1f2f3', 2.5) + s('M3 8 8 12', '#d1a862', 2),
  areared: r(3, 1, 12, 9, '#e22c30') + s('M5 8V4H8V8M10 3H13L10 8H13', '#fff', 1.2) + f('M1 14 3 10H13L15 14Z', '#66abc4'),
  tablered: r(1, 1, 14, 13, '#f0eeee') + r(3, 1, 12, 7, '#e22c30') + s('M5 6V3H8V6M10 3H13V6', '#fff') + s('M1 10H12M1 12H12', '#444'),
  portal: f('M1 1H15V15H12V5H9V15H7V5H4V15H1Z', '#79b8d6'), gate: f('M1 1H15V15H12V5H4V15H1Z', '#a9d7ec') + r(6, 5, 4, 10, '#4b9fc8'),
  mail: r(1, 2, 14, 12, '#eab63d') + s('M2 3 8 9 14 3', '#c42e20', 1.5) + r(1, 2, 14, 2, '#d94d2d'),
  stamp: s('M2 7 8 2 14 7V14H2Z', '#d56e6e', 1.8) + r(4, 6, 8, 7, '#b5d8d0') + c(8, 10, 2, '#5a7168'),
  pencil: s('M4 11 12 2', '#d7d8da', 4) + s('M9 5 12 2', '#d05a4a', 4) + r(1, 12, 9, 3, '#55a4d2'),
  book: f('M2 2 8 3V14L2 12Z', '#f3f0e8') + f('M8 3 14 4V14L8 13Z', '#d8ceb8') + s('M5 3V13', '#666'),
  tablist: r(1, 1, 14, 14, '#4795cd') + s('M1 5H8M1 9H8M1 12H8', '#fff', 2) + r(9, 5, 5, 5, '#e89a66'),
  handpen: r(3, 8, 8, 6, '#b2a692') + s('M4 2H14M5 4V9M8 3V8M12 3V9', '#999', 1.4) + r(4, 13, 6, 2, '#665'),
  spiral: s('M3 1V14M12 3Q4 0 5 7T12 10M8 1Q16 4 12 13 7 17 5 12', '#a9adb2', 1.2),
  info: c(8, 8, 7.5, '#eaf3fb') + c(8, 8, 6, '#3c86e0') + s('M6 6Q7 3 10 5L8 9V10', '#fff', 1.8) + c(8, 12, 1, '#fff'),
  copy1: s('M2 3H9V8H2Z') + r(5, 6, 7, 5, '#7d8691') + s('M5 6H12V11H5Z', '#bcc2c8', 1.5) + s('M8 9H15V14H8Z'),
  copy2: r(1, 2, 8, 5, '#9aa1aa') + r(4, 6, 8, 4) + r(7, 9, 8, 5, '#fff'),
  copy3: r(1, 2, 9, 5, '#c8cdd2') + r(4, 5, 9, 5, '#6d7682') + r(7, 8, 8, 6, '#9aa1aa') + s('M4 5H13V10H4Z', '#b8bec5'),
  copy4: r(1, 2, 9, 6, '#d5d8dc') + r(5, 6, 5, 5, '#8d949e') + r(8, 9, 7, 5, '#fff'),
  alignl: r(2, 2, 12, 4) + r(2, 7, 10, 3, '#9aa1aa') + r(2, 11, 8, 4), alignc: r(2, 2, 12, 3) + r(1, 6, 14, 3, '#7d8691') + r(2, 10, 12, 4, '#eee'),
  alignd: r(2, 2, 5, 5) + r(9, 2, 5, 5) + s('M1 8H15') + r(2, 10, 5, 4) + r(9, 10, 5, 4),
  tiles1: r(1, 4, 5, 9) + r(8, 4, 2, 3) + r(11, 4, 4, 6, '#bcc2c8'), tiles2: r(1, 3, 4, 9) + r(7, 9, 3, 3) + r(11, 4, 4, 8, '#bcc2c8') + s('M0 13H16'),
  tiles3: r(1, 4, 5, 3) + r(1, 9, 5, 3) + s('M6 8H10') + r(10, 4, 4, 3) + r(10, 9, 5, 3),
  pins: s('M3 5V14M8 5V14M13 5V14', '#858d98') + '<path d="M1 3H15" stroke="#b5bbc2" stroke-width="3" stroke-dasharray="3 1"/>',
  pinlist: r(2, 1, 4, 4) + r(2, 6, 4, 4) + r(2, 11, 4, 4) + s('M8 3H13M8 8H13M8 13H13', '#858d98', 2), slashes: s('M2 14 7 3M8 14 13 3', '#eceef0', 2.6) + s('M4 3H14', '#aaa'),

  wheelnav: o(8, 8, 7, '#292929') + o(8, 8, 4, '#292929') + s('M3 3 5 5M11 5 13 3', '#292929'),
  hand: s('M4 9 2 7Q1 9 5 15H12Q15 11 14 5M5 9V3Q6 1 7 3V8M7 3Q8 0 9 3V8M9 3Q11 0 11 3V8M11 4Q13 2 14 5', '#292929', 1.2),
  zoomx: s('M1 1 10 10M10 1 1 10M1 4V1H4M7 1H10', '#292929', 1.2) + o(12, 12, 3, '#292929'),
  orbit: s('M8 0V16M5 3 8 0 11 3M5 13 8 16 11 13M1 8Q8 3 15 8 8 13 1 8', '#292929', 1.1),
  motion: s('M1 1H15V5H1ZM4 1V5M8 1V5M12 1V5M2 7H12V15H2ZM5 9V13L9 11Z', '#292929'),
  navtop: ['0 0 8 5', s('M1 1H6L3.500 4Z', '#222')], navend: ['0 0 8 5', s('M2 0H6V4H2Z', '#222')],
  ucs: ['0 0 52 54', s('M5.500 9V44M9 46.500H40M2.500 43.500H8.500V49.500H2.500ZM5.500 44V46.500H8', '#c4c4c4') + s('M6 0 10 4 14 0M10 4V8M42 38 50 46M50 38 42 46', '#c4c4c4')],
  x: s('M4 4 12 12M12 4 4 12', '#c5cad0', 1.6),
  wrench: s('M3 14 10 6', L, 2.5) + s('M9 2Q8 7 10 7 14 8 15 5', L, 2.4),
  prompt: s('M1 2H15V14H1Z', '#4e5358', 1.3) + r(1, 2, 14, 3, '#4e5358') + s('M3 7 6 9 3 11M7 12H10', '#4e5358'),

  sgrid: s('M5 1V15M10 1V15M1 5H15M1 10H15', '#cdd1d6', 1.3),
  sdots: '<path d="M2 3H15M2 8H15M2 13H15" stroke="#d8dbdf" stroke-width="2" stroke-dasharray="2 3"/>',
  infer: r(1, 9, 8, 6, '#eee') + s('M9 9V2H14V6H9', '#b5bbc2', 1.3), dyn: s('M4 2V10M0 6H8', '#fff', 1.3) + r(7, 9, 9, 5, '#fff'),
  ortho: s('M2 2V14H15M2 9H7V14', '#a9b0b9'), polar: o(7, 8, 6, '#d7e8f8') + s('M7 8H16M7 8 13 1', '#d7e8f8'),
  iso: s('M8 0V6M8 6 1 1M8 6 13 13', '#9aa1aa') + s('M3 3 8 8', '#ab6a6a'), otrack: s('M1 14H15M2 13 14 2', '#d7e8f8', 1.3) + c(6, 9, 1.3, '#fff'),
  osnap: s('M4 4H15V15H4Z', '#d7e8f8', 1.4) + s('M1 1H6V6H1Z', '#d7e8f8'), slw: r(1, 2, 10, 1) + r(7, 5, 8, 2) + r(1, 6, 5, 1) + r(1, 9, 14, 2) + r(1, 13, 10, 3),
  transp: '<path d="M1 2.500H15M1 8.500H15M1 14H15" stroke="#fff" stroke-width="3" stroke-dasharray="3 2"/><path d="M3.500 5.500H15M3.500 11.500H15" stroke="#fff" stroke-width="3" stroke-dasharray="3 2"/>',
  cycle: r(6, 5, 10, 11, '#79d493') + s('M3 0V7M0 3H7', '#a9d8b8'), snap3d: s('M4 5H12V13H4ZM4 5 7 2H15L12 5M15 2V10L12 13', '#a9b0b9') + o(3, 12, 2, '#ab6a6a'),
  ducs: s('M3 1V13H15M1 3 3 1 5 3M13 11 15 13 13 15M6 10 10 6', '#fff', 1.3) + r(9, 3, 3, 3, '#fff'), filter: s('M3 5H11V14H3ZM3 5 6 2H14L11 5M14 2V11L11 14', '#90a5b9') + r(1, 3, 3, 3, B) + r(9, 12, 3, 3, B),
  gizmo: s('M8 1 15 7 13 14H3L1 7ZM8 3 12 13H4ZM3 8H13', '#d7e8f8'), annvis: ann + o(13, 4, 2.5, '#d7e8f8'), annauto: ann + s('M13 1V7M10 4H16'), ann: ann,
  gear: o(8, 8, 4.5, L, 3) + s('M8 0V4M8 12V16M0 8H4M12 8H16M2 2 5 5M11 11 14 14M14 2 11 5M5 11 2 14', L, 2), plus: s('M8 1V15M1 8H15', L, 1.8),
  ruler: r(5, 1, 7, 14, '#e0e3e6') + s('M5 4H9M5 7H8M5 10H9M5 13H8', '#333c48'), qprop: s('M2 1H14V15H2Z', L, 1.3) + s('M4 5H6M8 5H12M4 8H6M8 8H12M4 11H6M8 11H12'),
  lockui: s('M1 2H14V8M1 2V13H7') + r(1, 2, 13, 2) + r(9, 10, 6, 5) + s('M10 10V7H14V9'), isolate: s('M1 2H6V7H1ZM5 14 8 9 11 14Z', '#9fa6af') + o(12, 6, 3, '#9fa6af'),
  hwacc: s('M1 1H15V15H1Z', '#2f83d6', 1.8) + s('M4 4H9V9H4Z', '#2f83d6', 1.5) + o(10, 10, 3, '#2f83d6', 1.5), dash1: s('M1 6H15', '#6d7682') + s('M1 9H15'),
  dash2: s('M1 4H15M1 8H15M1 11H15', '#59626f'), dash3: s('M1 5H15M1 11H15', L, 1.6), dash4: s('M3 3H14M5 7H14M1 11H14', '#59626f', 1.5),
  perf: c(8, 8, 7, '#dfeaf5') + f('M5 10 12 4 9 12Z', '#5488bd'), full: s('M1 2H15V14H1Z', '#b5bbc2') + f('M8 5H12V9ZM4 8V12H8Z'), menu: r(0, 2, 16, 2) + r(0, 7, 16, 2) + r(0, 12, 16, 2)
};

function svg(name) {
  const icon = ICONS[name];
  const [box, art] = Array.isArray(icon) ? icon : ['0 0 16 16', icon];
  return `<svg viewBox="${box}" aria-hidden="true">${art}</svg>`;
}

document.querySelectorAll('[data-icon]').forEach(el => {
  el.innerHTML = svg(el.dataset.icon);
  if (el.tagName === 'BUTTON' && !el.hasAttribute('aria-label')) el.setAttribute('aria-label', el.dataset.icon);
});

document.querySelectorAll('[data-tools]').forEach(bar => {
  const cells = bar.dataset.tools.split(' ').map(n =>
    n === '|' ? '<i class="sep"></i>' : `<button aria-label="${n}">${svg(n)}</button>`);
  bar.innerHTML = '<i class="grip"></i>' + cells.join('') + '<span class="shut">x</span>';
});
```
